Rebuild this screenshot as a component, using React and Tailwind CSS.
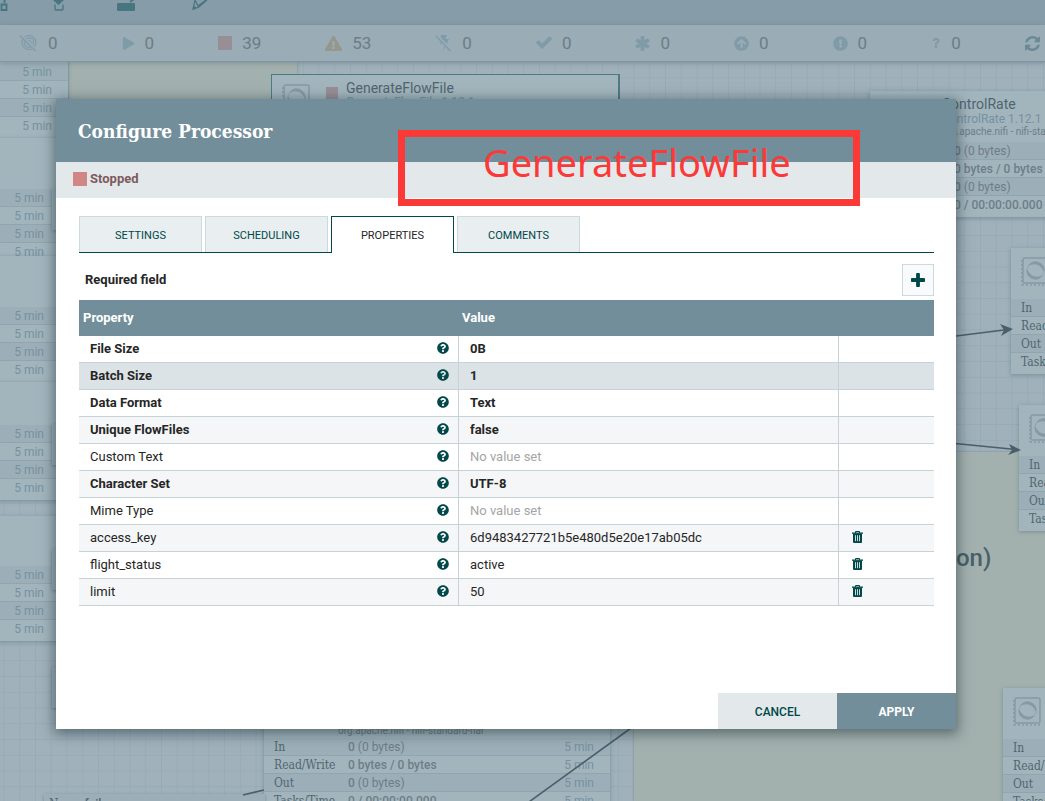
import React from 'react';
import {
  FaPlay, FaExclamationTriangle, FaArrowCircleUp,
  FaExclamationCircle, FaQuestion, FaQuestionCircle,
} from 'react-icons/fa';

const slab = "font-['DejaVu_Serif_Condensed','DejaVu_Serif',serif]";

function TransmitOffIcon() {
  return (
    <svg width="19" height="18" viewBox="0 0 18 18" fill="none" stroke="currentColor" strokeWidth="1.2">
      <circle cx="9.5" cy="8.5" r="7" />
      <circle cx="9.5" cy="8.5" r="4.6" />
      <circle cx="9.5" cy="8.5" r="2" />
      <path d="M1 1 L17 17" stroke="#9aacb5" strokeWidth="3" />
      <path d="M0.5 1.5 L16 17" />
    </svg>
  );
}

function BoltOffIcon() {
  return (
    <svg width="17" height="18" viewBox="0 0 17 18">
      <path d="M6 1h6l-2 4h4L8 17l1.500-7H5z" fill="currentColor" />
      <path d="M1 1 L16 17" stroke="#9aacb5" strokeWidth="3.600" />
      <path d="M1 2 L15.500 17" stroke="currentColor" strokeWidth="1.300" />
    </svg>
  );
}

function CheckIcon() {
  return (
    <svg width="16" height="16" viewBox="120 190 1552 1552" fill="currentColor">
      <path d="M1671 566q0 40-28 68l-724 724-136 136q-28 28-68 28t-68-28l-136-136-362-362q-28-28-28-68t28-68l136-136q28-28 68-28t68 28l294 295 656-657q28-28 68-28t68 28l136 136q28 28 28 68z" />
    </svg>
  );
}

function AsteriskIcon() {
  return (
    <svg width="15" height="15" viewBox="60 128 1540 1540" fill="currentColor">
      <path d="M1482 1050q46 26 59.500 77.500T1529 1225l-64 110q-26 46-77.500 59.500T1290 1382l-266-153v307q0 52-38 90t-90 38H768q-52 0-90-38t-38-90v-307l-266 153q-46 26-97.500 12.500T199 1335l-64-110q-26-46-12.500-97.500T182 1050l266-154-266-154q-46-26-59.500-77.500T135 567l64-110q26-46 77.500-59.500T374 410l266 153V256q0-52 38-90t90-38h128q52 0 90 38t38 90v307l266-153q46-26 97.500-12.500T1465 457l64 110q26 46 12.500 97.500T1482 742l-266 154z" />
    </svg>
  );
}

function PlusIcon() {
  return (
    <svg width="14" height="14" viewBox="192 128 1408 1408" fill="currentColor">
      <path d="M1600 736v192q0 40-28 68t-68 28h-416v416q0 40-28 68t-68 28H800q-40 0-68-28t-28-68v-416H288q-40 0-68-28t-28-68V736q0-40 28-68t68-28h416V224q0-40 28-68t68-28h192q40 0 68 28t28 68v416h416q40 0 68 28t28 68z" />
    </svg>
  );
}

function RefreshIcon() {
  return (
    <svg width="15" height="15" viewBox="0 0 1536 1536" fill="currentColor">
      <path d="M1511 928q0 5-1 7-64 268-268 434.500T764 1536q-146 0-282.500-55T238 1324l-129 129q-19 19-45 19t-45-19-19-45V960q0-26 19-45t45-19h448q26 0 45 19t19 45-19 45l-137 137q71 66 161 102t187 36q134 0 250-65t186-179q11-17 53-117 8-23 30-23h192q13 0 22.500 9.500t9.500 22.500zm25-800v448q0 26-19 45t-45 19h-448q-26 0-45-19t-19-45 19-45l138-138Q969 256 768 256q-134 0-250 65T332 500q-11 17-53 117-8 23-30 23H50q-13 0-22.500-9.500T18 608v-7q65-268 270-434.500T768 0q146 0 284 55.500T1297 212l130-129q19-19 45-19t45 19 19 45z" />
    </svg>
  );
}

function TrashIcon() {
  return (
    <svg width="11" height="12" viewBox="0 0 11 12" fill="none">
      <path d="M3.500 2V0.500h4V2" stroke="currentColor" />
      <path d="M0 1.500h11v1.300H0z" fill="currentColor" />
      <path d="M1 2.500h9V11q0 1-1 1H2q-1 0-1-1z" fill="currentColor" />
      <path d="M3.500 4.200v6M5.500 4.200v6M7.500 4.200v6" stroke="#fff" strokeWidth="0.800" />
    </svg>
  );
}

function ProcessorIcon() {
  return (
    <svg width="28" height="29" viewBox="0 0 28 29" fill="none" stroke="#8799a3" className="shrink-0">
      <rect x="2" y="1" width="25" height="25" rx="1.500" strokeWidth="1.500" />
      <path d="M0.800 3v25" strokeWidth="1.300" strokeDasharray="2 2" />
      <path d="M1 28h26" strokeWidth="1.300" strokeDasharray="2 2" />
      <circle cx="14.500" cy="13.500" r="8.500" strokeWidth="0.600" />
      <path d="M8 8a8.500 8.500 0 0 1 15 6q-5-10-15-6z" fill="#8799a3" strokeWidth="0.800" />
      <path d="M21 19a8.500 8.500 0 0 1-15-6q5 10 15 6z" fill="#8799a3" strokeWidth="0.800" />
    </svg>
  );
}

const counters = [
  { label: 'Transmitting off', icon: <TransmitOffIcon />, value: 0 },
  { label: 'Running', icon: <FaPlay size={13} />, value: 0 },
  { label: 'Stopped', icon: <span className="block size-[14px] bg-[#988e96]" />, value: 39 },
  { label: 'Invalid', icon: <FaExclamationTriangle size={17} className="text-[#95968c]" />, value: 53 },
  { label: 'Disabled', icon: <BoltOffIcon />, value: 0 },
  { label: 'Up to date', icon: <CheckIcon />, value: 0 },
  { label: 'Locally modified', icon: <AsteriskIcon />, value: 0 },
  { label: 'Stale', icon: <FaArrowCircleUp size={15} />, value: 0 },
  { label: 'Modified and stale', icon: <FaExclamationCircle size={15} />, value: 0 },
  { label: 'Sync failure', icon: <FaQuestion size={10} />, value: 0 },
];

const statLabels = ['In', 'Read/Write', 'Out', 'Tasks/Time'];

function StatRows({ labels, values, last }) {
  return (
    <div className="pb-[3px]">
      {statLabels.map((name, i) => (
        <div
          key={name}
          className="flex h-[18px] items-center border-b border-[#91a5b0] px-[10px] text-[12px] leading-none last:border-b-0 odd:bg-[#9cafb8]"
        >
          {labels && <span className={`w-[74px] shrink-0 whitespace-nowrap text-[#50656f] ${slab}`}>{name}</span>}
          {values && (
            <span className="whitespace-nowrap text-[#6f7d88]">
              {i % 2 ? (
                <b className="font-medium">{i === 1 ? '0 bytes / 0 bytes' : '0 / 00:00:00.000'}</b>
              ) : (
                <><b className="font-medium">0</b> (0 bytes)</>
              )}
            </span>
          )}
          {last && <span className="ml-auto whitespace-nowrap pr-[6px] text-[#7691a0]">5 min</span>}
        </div>
      ))}
    </div>
  );
}

const cardBase = 'absolute flex flex-col justify-end bg-[#a2b5bd] shadow-[0_1px_4px_rgba(70,95,110,0.45)]';

function SideCard({ place }) {
  return (
    <div className={`${cardBase} ${place}`}>
      <StatRows last />
    </div>
  );
}

function RightCard({ place }) {
  return (
    <div className={`${cardBase} w-[350px] ${place}`}>
      <div className="flex-1 px-[10px] pt-[9px]"><ProcessorIcon /></div>
      <StatRows labels />
    </div>
  );
}

function Canvas() {
  return (
    <main className="relative min-h-[739px] flex-1 overflow-hidden bg-[#a0b1bb]">
      <svg className="absolute inset-0 size-full" aria-hidden="true">
        <defs>
          <pattern id="grid" x="3.500" y="15.500" width="15.750" height="15.750" patternUnits="userSpaceOnUse">
            <path d="M0.500 0v15.750M0 0.500h15.750" stroke="#98abb5" fill="none" />
          </pattern>
        </defs>
        <rect width="100%" height="100%" fill="url(#grid)" />
      </svg>

      <div className="absolute -top-px left-[69px] h-[120px] w-[228px] bg-[#a3b1ae] shadow-[0_1px_3px_rgba(70,95,110,0.4)]" />
      <div className="absolute bottom-0 left-[634px] right-0 top-[390px] bg-[#a3b1ae] shadow-[0_0_2px_rgba(70,95,110,0.5)]" />
      <p className="absolute left-[956px] top-[480px] text-[24px] font-medium leading-8 text-[#4a5f6a]">on)</p>

      <SideCard place="left-[-40px] top-[-40px] h-[116px] w-[108px]" />
      <SideCard place="left-[-40px] top-[76px] h-[126px] w-[100px]" />
      <SideCard place="left-[-40px] top-[194px] h-[126px] w-[100px]" />
      <SideCard place="left-[-40px] top-[320px] h-[118px] w-[100px]" />
      <SideCard place="left-[-40px] top-[454px] h-[125px] w-[100px]" />
      <div className="absolute left-[52px] top-[127px] h-[41px] w-10 bg-[#9cafb8] shadow-[0_1px_3px_rgba(70,95,110,0.5)]" />
      <div className="absolute left-[52px] top-[362px] h-[41px] w-10 bg-[#9cafb8] shadow-[0_1px_3px_rgba(70,95,110,0.5)]" />
      <div className="absolute left-[52px] top-[487px] h-[41px] w-10 bg-[#9cafb8] shadow-[0_1px_3px_rgba(70,95,110,0.5)]" />
      <div className="absolute left-[52px] top-[605px] h-[41px] w-10 bg-[#9cafb8] shadow-[0_1px_3px_rgba(70,95,110,0.5)]" />

      <div className="absolute left-[271px] top-[12px] flex h-[80px] w-[349px] border border-r-2 border-[#4c7b85] bg-[#a2b5bd] pl-[10px] pt-[9px]">
        <ProcessorIcon />
        <span className="ml-4 mt-[3px] size-[12px] bg-[#988e96]" />
        <div className="ml-2 text-[#4f6570]">
          <p className="text-[14px] leading-[8px]">GenerateFlowFile</p>
          <p className="pt-[3px] text-[12px] leading-[14px] text-[#7691a0]">GenerateFlowFile 1.12.1</p>
        </div>
      </div>

      <div className={`${cardBase} left-[870px] top-[29px] h-[126px] w-[350px]`}>
        <div className="flex-1 pl-[72px] pt-1">
          <p className="text-[14px] leading-[18px] text-[#4f6570]">ControlRate</p>
          <p className="text-[12px] leading-[12px] text-[#7691a0]">ControlRate 1.12.1</p>
          <p className="text-[10px] leading-[14px] text-[#6f7d88]">org.apache.nifi - nifi-standard-nar</p>
        </div>
        <StatRows labels values />
      </div>

      <RightCard place="left-[1011px] top-[186px] h-[126px]" />
      <RightCard place="left-[1019px] top-[343px] h-[126px]" />
      <RightCard place="left-[1003px] top-[626px] h-[126px]" />

      <div className={`${cardBase} left-[264px] top-[625px] h-[126px] w-[346px]`}>
        <p className="pl-[74px] text-[10px] leading-[14px] text-[#6f7d88]">org.apache.nifi - nifi-standard-nar</p>
        <StatRows labels values last />
      </div>
      <div className="absolute left-[44px] top-[732px] w-[221px] bg-[#9cafb8] px-[5px] pt-[2px] text-[12px] leading-4 text-[#50656f] shadow-[0_1px_3px_rgba(70,95,110,0.5)]">
        <span className={slab}>Name</span> <b className="font-medium">failure</b>
      </div>

      <svg className="absolute inset-0 size-full" fill="none" stroke="#4a5f6a" strokeWidth="1.600" aria-hidden="true">
        <path d="M940 276 1008 267.500M940 380 1016 387.500M638 661 522 745M243 733 264 728" />
        <path d="M1013 267l-13-5 4 6-3 6zM1021 388l-12-6 3 6-4 5z" fill="#4a5f6a" stroke="none" />
      </svg>
    </main>
  );
}

const properties = [
  { name: 'File Size', value: '0B', required: true },
  { name: 'Batch Size', value: '1', required: true, selected: true },
  { name: 'Data Format', value: 'Text', required: true },
  { name: 'Unique FlowFiles', value: 'false', required: true },
  { name: 'Custom Text' },
  { name: 'Character Set', value: 'UTF-8', required: true },
  { name: 'Mime Type' },
  { name: 'access_key', value: '6d9483427721b5e480d5e20e17ab05dc', custom: true },
  { name: 'flight_status', value: 'active', custom: true },
  { name: 'limit', value: '50', custom: true },
];

const tabs = ['SETTINGS', 'SCHEDULING', 'PROPERTIES', 'COMMENTS'];

function PropertyTable() {
  return (
    <table className="w-full table-fixed border-separate border-spacing-0 text-left text-[13px] leading-[18px] text-[#262626]">
      <colgroup>
        <col className="w-[380px]" />
        <col className="w-[380px]" />
        <col />
      </colgroup>
      <thead>
        <tr className="h-9 bg-[#728e9b] text-white">
          <th className="px-1 font-bold">Property</th>
          <th className="px-[3px] font-bold">Value</th>
          <th aria-label="Actions" />
        </tr>
      </thead>
      <tbody>
        {properties.map((p) => (
          <tr
            key={p.name}
            className={`h-[27px] ${p.selected ? 'bg-[#dbe3e6]' : 'even:bg-[#f4f6f7]'} ${p.required ? 'font-bold' : ''}`}
          >
            <td className="border-b border-r border-[#c7d2d7] py-0 pl-[11px] pr-[9px]">
              <div className="flex items-center justify-between">
                {p.name}
                <button type="button" aria-label={`About ${p.name}`} className="pb-[2px] text-[#004849]">
                  <FaQuestionCircle size={12} />
                </button>
              </div>
            </td>
            <td className="border-b border-r border-[#c7d2d7] py-0 pl-[11px]">
              {p.value ?? <span className="text-[#a5a5a5]">No value set</span>}
            </td>
            <td className="border-b border-[#c7d2d7] py-0 pl-[13px]">
              {p.custom && (
                <button type="button" aria-label={`Delete ${p.name}`} className="block pb-[2px] text-[#004849]">
                  <TrashIcon />
                </button>
              )}
            </td>
          </tr>
        ))}
      </tbody>
    </table>
  );
}

function Dialog() {
  return (
    <section
      role="dialog"
      aria-labelledby="dialog-title"
      className="relative flex min-h-[630px] flex-1 flex-col bg-white shadow-[0_3px_12px_2px_rgba(20,40,45,0.5)]"
    >
      <header className="flex h-[63px] items-center bg-[#728e9b] px-[22px]">
        <h1 id="dialog-title" className={`text-[19px] font-bold leading-6 text-white ${slab}`}>Configure Processor</h1>
      </header>
      <div className="flex h-9 items-center gap-[3px] bg-[#e3e8eb] px-[17px] pb-[2px] text-[13px] font-bold text-[#7e5a5c]">
        <span className="size-[14px] bg-[#d18686]" />
        Stopped
      </div>
      <div className="flex flex-1 flex-col px-[22px] pl-[23px] pt-[18px]">
        <div role="tablist" className="flex h-[37px] gap-[3px] border-b border-[#004849]">
          {tabs.map((t) => {
            const on = t === 'PROPERTIES';
            return (
              <button
                key={t}
                type="button"
                role="tab"
                aria-selected={on}
                className={`w-[123px] border border-b-0 text-[11px] ${on ? '-mb-px border-[#004849] bg-white pt-[2px] text-[#262626]' : 'border-[#ccdadb] bg-[#e9eef0] pt-[3px] text-[#004849]'}`}
              >
                {t}
              </button>
            );
          })}
        </div>
        <div className="flex items-center justify-between pb-1 pl-[6px] pt-[11px]">
          <span className="text-[13px] font-bold text-[#262626]">Required field</span>
          <button type="button" aria-label="Add property" className="flex size-8 items-center justify-center border border-[#ccdadb] bg-[#f9fafb] text-[#004849]">
            <PlusIcon />
          </button>
        </div>
        <PropertyTable />
      </div>
      <footer className="flex h-9 justify-end text-[12px]">
        <button type="button" className="w-[119px] bg-[#e3e8eb] pt-[2px] font-medium text-[#004849]">CANCEL</button>
        <button type="button" className="w-[119px] bg-[#728e9b] pt-[2px] font-bold text-white">APPLY</button>
      </footer>
      <div className="absolute left-[342px] top-[31px] h-[76px] w-[462px] border-[7px] border-[#fb3a38] pl-[78px] font-['Noto_Sans','Open_Sans',sans-serif] text-[38px] leading-[50px] text-[#fb3a38]">
        GenerateFlowFile
      </div>
    </section>
  );
}

export default function App() {
  return (
    <div className="relative flex min-h-screen flex-col overflow-hidden bg-[#a0b1bb] font-[Roboto,sans-serif]">
      <header className="h-[25px] bg-[#869da9]">
        <svg width="230" height="14" viewBox="0 0 230 14" className="block" aria-hidden="true">
          <g fill="none" stroke="#477580" strokeWidth="1.800">
            <path d="M4.500 0v3M1.500 4.500h5v5.500h-5z" />
            <path d="M55 4.500v4.500q0 1 1 1h6q1 0 1-1V4.500" strokeWidth="1.300" />
            <path d="M130 2l4-3" />
            <path d="M195 0l-2 9 6-2 9-8M195 0l3 6 8-6" strokeWidth="1.200" />
          </g>
          <path d="M53 0h11l-5.500 5zM117 4q0-1 1-1h16q1 0 1 1v6q0 1-1 1h-16q-1 0-1-1zM193 10l1-4 3 2z" fill="#477580" />
        </svg>
      </header>
      <div className="z-10 flex h-[37px] items-center gap-16 border-b border-[#8097a3] bg-[#9aacb5] pl-[19px] text-[#809ba8] shadow-[0_1px_5px_rgba(70,95,110,0.4)]">
        {counters.map((c) => (
          <span key={c.label} title={c.label} className="flex shrink-0 items-center gap-[10px]">
            {c.icon}
            <span className="text-[17px] leading-5 text-[#6e7c87]">{c.value}</span>
          </span>
        ))}
        <button type="button" aria-label="Refresh" className="shrink-0 text-[#6b8996]"><RefreshIcon /></button>
      </div>
      <Canvas />
      <div className="absolute inset-0 z-20 flex items-start pb-[72px] pl-14 pr-[89px] pt-[99px]">
        <Dialog />
      </div>
    </div>
  );
}
